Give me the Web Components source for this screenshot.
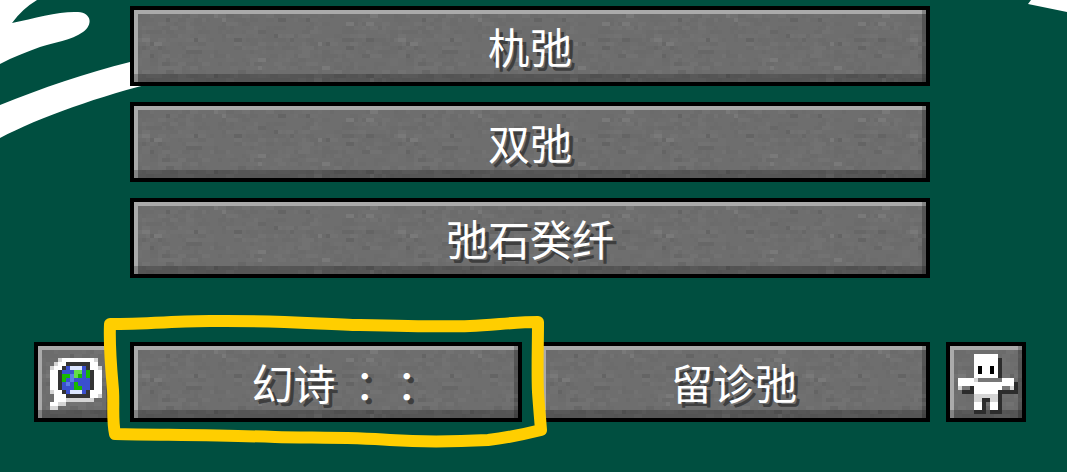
<!DOCTYPE html>
<html lang="zh">
<head>
<meta charset="utf-8">
<meta name="viewport" content="width=device-width">
<title>Title menu</title>
<style>
body { margin: 0; background: #004f40; font-family: "Noto Sans CJK JP", "Noto Sans CJK SC", sans-serif; }
</style>
</head>
<body>
<title-menu></title-menu>
<script>
const CELL = 4;

// Stone texture: a repeating pattern of 4px cells in slightly different greys.
function stone() {
  let seed = 41, cells = '';
  const next = () => (seed = (seed * 16807) % 2147483647) / 2147483647;
  const soft = ['#727272', '#6b6b6b', '#707070', '#6c6c6c'];
  const strong = ['#797979', '#646464', '#676767'];
  for (let y = 0; y < 18; y++) {
    for (let x = 0; x < 64;) {
      const run = 1 + Math.floor(next() * 2), n = next();
      if (n < 0.5) {
        const tones = n < 0.06 ? strong : soft;
        const tone = tones[Math.floor(next() * tones.length)];
        cells += `<rect x="${x * CELL}" y="${y * CELL}" width="${run * CELL}" height="${CELL}" fill="${tone}"/>`;
      }
      x += run;
    }
  }
  return `<svg class="stone" aria-hidden="true" shape-rendering="crispEdges"><defs><pattern id="p" width="256" height="72" patternUnits="userSpaceOnUse"><rect width="256" height="72" fill="#6e6e6e"/>${cells}</pattern></defs><rect width="100%" height="100%" fill="url(#p)"/></svg>`;
}

class StoneButton extends HTMLElement {
  constructor() {
    super();
    this.attachShadow({ mode: 'open' }).innerHTML = `
      <style>
        :host { display: block; min-width: 0; }
        button { position: relative; display: grid; place-items: center; width: 100%; height: 80px; margin: 0; padding: 0;
          border: 4px solid #000; border-radius: 0; background: #6e6e6e; color: #fff; font: inherit; font-size: 42px;
          line-height: 48px; overflow: hidden; cursor: pointer; text-shadow: 4px 4px 0 #3e3e3e; }
        .stone { position: absolute; inset: 0; width: 100%; height: 100%; }
        .bevel { position: absolute; inset: 0; border-style: solid; border-width: 4px 0 0 4px; border-color: #aaa; }
        .shade { position: absolute; inset: 0; box-shadow: inset -4px 0 0 rgba(0,0,0,.22), inset 0 -8px 0 rgba(0,0,0,.22); }
        .label { position: relative; display: block; white-space: pre; text-spacing-trim: space-all; }
        ::slotted(svg) { display: block; }
      </style>
      <button type="button">${stone()}<span class="bevel"></span><span class="shade"></span><span class="label"><slot></slot></span></button>`;
  }
  connectedCallback() {
    const name = this.getAttribute('label');
    if (name) this.shadowRoot.querySelector('button').setAttribute('aria-label', name);
  }
}
customElements.define('stone-button', StoneButton);

// Sprites are rows of letters on a 4px grid; a dot leaves the cell clear.
const PALETTE = { W: '#ffffff', w: '#d5d5d5', K: '#343434', k: '#2c2c2c', e: '#000000', n: '#777777',
  B: '#3a50cf', b: '#5b7ce8', L: '#dce6ff', G: '#18b800', g: '#65dc4a' };
const SPRITES = {
  globe: [
    '..............',
    '...wWWWWWWWWw.',
    '..wWWKKKKKKWW.',
    '.wWWKBLLLBKWWw',
    '.WWKBBBggBGKWW',
    '.WWKGGbgGBGKWW',
    '.WWKGBbBBBBKWW',
    '.WWKBbBGBBBKWW',
    '.WWKBBBGGBBKWW',
    '.wWWKBLLLBKWWW',
    '..WWWKKKKKKWWw',
    '..WWWwwwwwww..',
    '.WWww.........',
    '.ww...........'
  ],
  figure: [
    '................',
    '.....WWWWWW.....',
    '.....WWWWWWk....',
    '.....WWWWWWk....',
    '.....WeWWeWk....',
    '.....WeWWeWk....',
    '.....WWWWWWk....',
    '.WWWWwnnnnnnWWW.',
    '.WWWWWWWWWWWWWWk',
    '.wnnkWWWWWWWnnwk',
    '..kkkWWWWWWkkkkk',
    '.....wwwwwwk....',
    '.....wwkkwwk....',
    '.....WWk.WWk....',
    '.....WWk.WWk....',
    '.....kkk.kkk....'
  ]
};

function sprite(name) {
  const rows = SPRITES[name];
  const w = rows[0].length * CELL, h = rows.length * CELL;
  let rects = '';
  rows.forEach((row, y) => [...row].forEach((c, x) => {
    if (c !== '.') rects += `<rect x="${x * CELL}" y="${y * CELL}" width="4" height="4" fill="${PALETTE[c]}"/>`;
  }));
  return `<svg width="${w}" height="${h}" viewBox="0 0 ${w} ${h}" shape-rendering="crispEdges" aria-hidden="true">${rects}</svg>`;
}

// Hand-drawn marker loop around whatever is slotted in.
class MarkerHighlight extends HTMLElement {
  constructor() {
    super();
    this.attachShadow({ mode: 'open' }).innerHTML = `
      <style>
        :host { display: block; position: relative; z-index: 1; min-width: 0; }
        svg { position: absolute; top: -30px; left: -30px; width: calc(100% + 60px); height: calc(100% + 60px); pointer-events: none; overflow: visible; }
      </style>
      <slot></slot>
      <svg viewBox="0 0 452 140" preserveAspectRatio="none" aria-hidden="true">
        <path d="M10 12 C45 12 80 9 110 9 C170 8 220 12 260 13 C300 14 340 15 370 14 C395 13 415 10 438 10 C438 35 437 60 438 80 C439 95 440 105 441 118 C425 122 405 126 388 128 C350 130 320 130 290 128 C250 125 210 126 175 125 C120 123 65 123 15 122 C12 108 14 94 13 78 C11 55 9 35 10 12 Z" fill="none" stroke="#ffce00" stroke-width="12" stroke-linejoin="round" stroke-linecap="round"/>
      </svg>`;
  }
}
customElements.define('marker-highlight', MarkerHighlight);

class TitleMenu extends HTMLElement {
  constructor() {
    super();
    this.attachShadow({ mode: 'open' }).innerHTML = `
      <style>
        :host { display: block; position: relative; overflow: hidden; background: #004f40; }
        .art { position: absolute; top: 0; pointer-events: none; }
        .left { left: 0; }
        .right { right: 0; }
        nav { position: relative; display: grid; grid-template-columns: 80px 1fr 1fr 80px; gap: 16px; padding: 6px 41px 50px 34px; }
        .wide { grid-column: 2 / 4; }
        .first { grid-column: 1; }
        .last-row { margin-top: 48px; }
      </style>
      <svg class="art left" width="180" height="150" aria-hidden="true">
        <path fill="#fff" d="M0 0 H37 Q22 9 12 23 C35 18 60 11 78 12 C92 13 93 25 83 32 C72 40 53 43 40 47 C27 52 13 57 0 64 Z M0 105 C42 88 86 73 130 62 L160 81 C100 96 40 117 0 138 Z"/>
      </svg>
      <svg class="art right" width="60" height="20" aria-hidden="true">
        <path fill="#fff" d="M24 0 L21 4 L60 12 V0 Z"/>
      </svg>
      <nav aria-label="Menu">
        <stone-button class="wide">朹弛</stone-button>
        <stone-button class="wide">双弛</stone-button>
        <stone-button class="wide">弛石癸纤</stone-button>
        <stone-button class="first last-row" label="Language">${sprite('globe')}</stone-button>
        <marker-highlight class="last-row"><stone-button>    幻诗  ：：</stone-button></marker-highlight>
        <stone-button class="last-row">留诊弛</stone-button>
        <stone-button class="last-row" label="Accessibility">${sprite('figure')}</stone-button>
      </nav>`;
  }
}
customElements.define('title-menu', TitleMenu);
</script>
</body>
</html>
